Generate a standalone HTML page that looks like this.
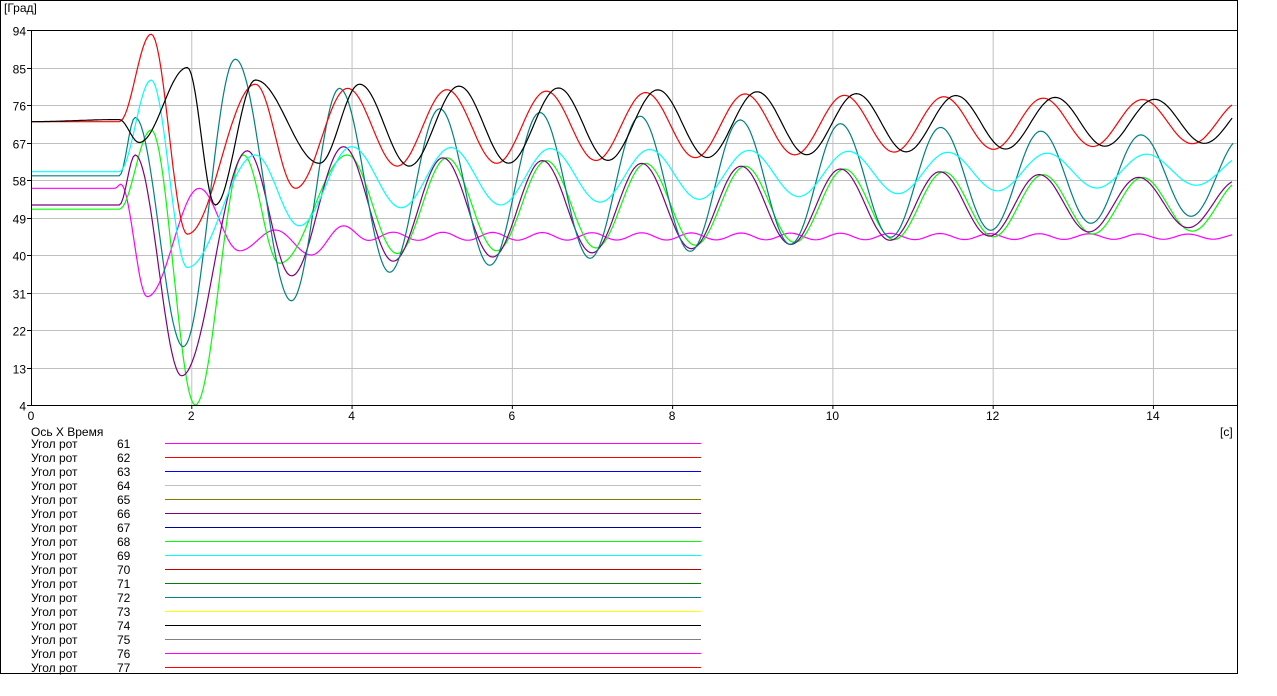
<!DOCTYPE html>
<html><head><meta charset="utf-8"><style>
html,body{margin:0;padding:0;background:#fff;width:1277px;height:696px;overflow:hidden}
svg{display:block;font-family:"Liberation Sans",sans-serif;font-size:12px}
</style></head><body>
<svg id="s" width="1277" height="696" xmlns="http://www.w3.org/2000/svg">
<rect x="0.5" y="0.5" width="1237" height="673" fill="#fff" stroke="#000"/>
<g id="grid" stroke="#c0c0c0" stroke-width="1"></g>
<g id="lbl" fill="#000"></g>
<text x="4" y="12" fill="#000">[Град]</text>
<text x="1220" y="436" fill="#000">[с]</text>
<text x="31" y="436">Ось X  Время</text>
<g id="curves" fill="none" stroke-width="1.2"></g>
<line x1="31" y1="30.5" x2="1237" y2="30.5" stroke="#000"/>
<line x1="31" y1="405.5" x2="1237" y2="405.5" stroke="#000"/>
<line x1="31.5" y1="30" x2="31.5" y2="406" stroke="#000"/>
<g id="leg" fill="#000"></g>
</svg>
<script>
var NS="http://www.w3.org/2000/svg";
function X(t){return 31+80.14*t}
function Y(v){return 30+(94-v)*375/90}
function el(n,a,p,txt){var e=document.createElementNS(NS,n);for(var k in a)e.setAttribute(k,a[k]);if(txt!=null)e.textContent=txt;document.getElementById(p).appendChild(e);return e}
for(var t=2;t<=14;t+=2){el("line",{x1:X(t)+.5,y1:31,x2:X(t)+.5,y2:405},"grid");el("line",{x1:X(t)+.5,y1:405,x2:X(t)+.5,y2:409,stroke:"#000"},"grid");}
for(var t=0;t<=14;t+=2){el("text",{x:X(t),y:420,"text-anchor":"middle"},"lbl",String(t));}
for(var v=4;v<=94;v+=9){var y=Math.round(Y(v))+.5;if(v>4&&v<94)el("line",{x1:31,y1:y,x2:1237,y2:y},"grid");el("line",{x1:27,y1:y,x2:31,y2:y,stroke:"#000"},"grid");el("text",{x:26,y:y+5,"text-anchor":"end"},"lbl",String(v));}
function gen(man,p0,P,pk0,pk1,tr0,tr1){
  var pts=man.slice();var t=p0;
  while(t<16){t+=P/2;var f=Math.min(1,(t-p0)/(15-p0));
    pts.push([t,tr0+(tr1-tr0)*f]);t+=P/2;f=Math.min(1,(t-p0)/(15-p0));pts.push([t,pk0+(pk1-pk0)*f]);}
  return pts;}
function path(pts){var d="";for(var i=0;i<pts.length-1;i++){var a=pts[i],b=pts[i+1];var n=Math.max(2,Math.ceil((b[0]-a[0])*40));
  for(var j=(i?1:0);j<=n;j++){var s=j/n;var t=a[0]+(b[0]-a[0])*s;if(t>15)break;var v=a[1]+(b[1]-a[1])*(1-Math.cos(Math.PI*s))/2;
   d+=(d?"L":"M")+X(t).toFixed(1)+","+Y(v).toFixed(1);}
  if(b[0]>15)break;}return d;}
var C=[
["#ff00ff",gen([[0,56],[1.05,56],[1.12,57],[1.45,30],[2.1,56],[2.6,41],[3.05,46],[3.5,40],[3.9,47]],3.9,0.62,45.5,45,43.5,43.8)],
["#00ff00",gen([[0,51],[1.1,51],[1.5,70],[2.05,4],[2.65,64],[3.1,38],[3.95,64]],3.95,1.24,64,58,40,46)],
["#800080",gen([[0,52],[1.1,52],[1.3,64],[1.88,11],[2.7,65],[3.25,35],[3.9,66]],3.9,1.24,64,58,38,47)],
["#008080",gen([[0,59],[1.1,59],[1.3,73],[1.9,18],[2.55,87],[3.25,29],[3.85,80]],3.85,1.25,76,68,35,50)],
["#00ffff",gen([[0,60],[1.1,60],[1.5,82],[1.95,37],[2.8,64],[3.35,47],[4.0,66]],4.0,1.24,66,64,51,57)],
["#ff0000",gen([[0,72],[1.1,72],[1.5,93],[1.95,45],[2.8,81],[3.3,56],[3.95,80]],3.95,1.24,80,77,61,67)],
["#000000",gen([[0,72],[1.1,72.5],[1.35,67],[1.95,85],[2.3,52],[2.8,82],[3.6,62],[4.1,81]],4.1,1.24,81,77,61,67)]
];
C.forEach(function(c){el("path",{d:path(c[1]),stroke:c[0]},"curves");});
var L=["#ff00ff","#ff0000","#0000ff","#c0c0c0","#808000","#800080","#0000a0","#00ff00","#00ffff","#c00000","#008000","#008080","#ffff00","#000000","#808080","#ff00ff","#ff0000"];
L.forEach(function(c,i){var y=443+i*14;el("text",{x:31,y:y+5},"leg","Угол рот");el("text",{x:117,y:y+5},"leg",String(61+i));
  var r=el("rect",{x:165,y:y,width:536,height:1,"shape-rendering":"crispEdges"},"leg");r.setAttribute("fill",c);r.style.fill=c;});
</script>
</body></html>
